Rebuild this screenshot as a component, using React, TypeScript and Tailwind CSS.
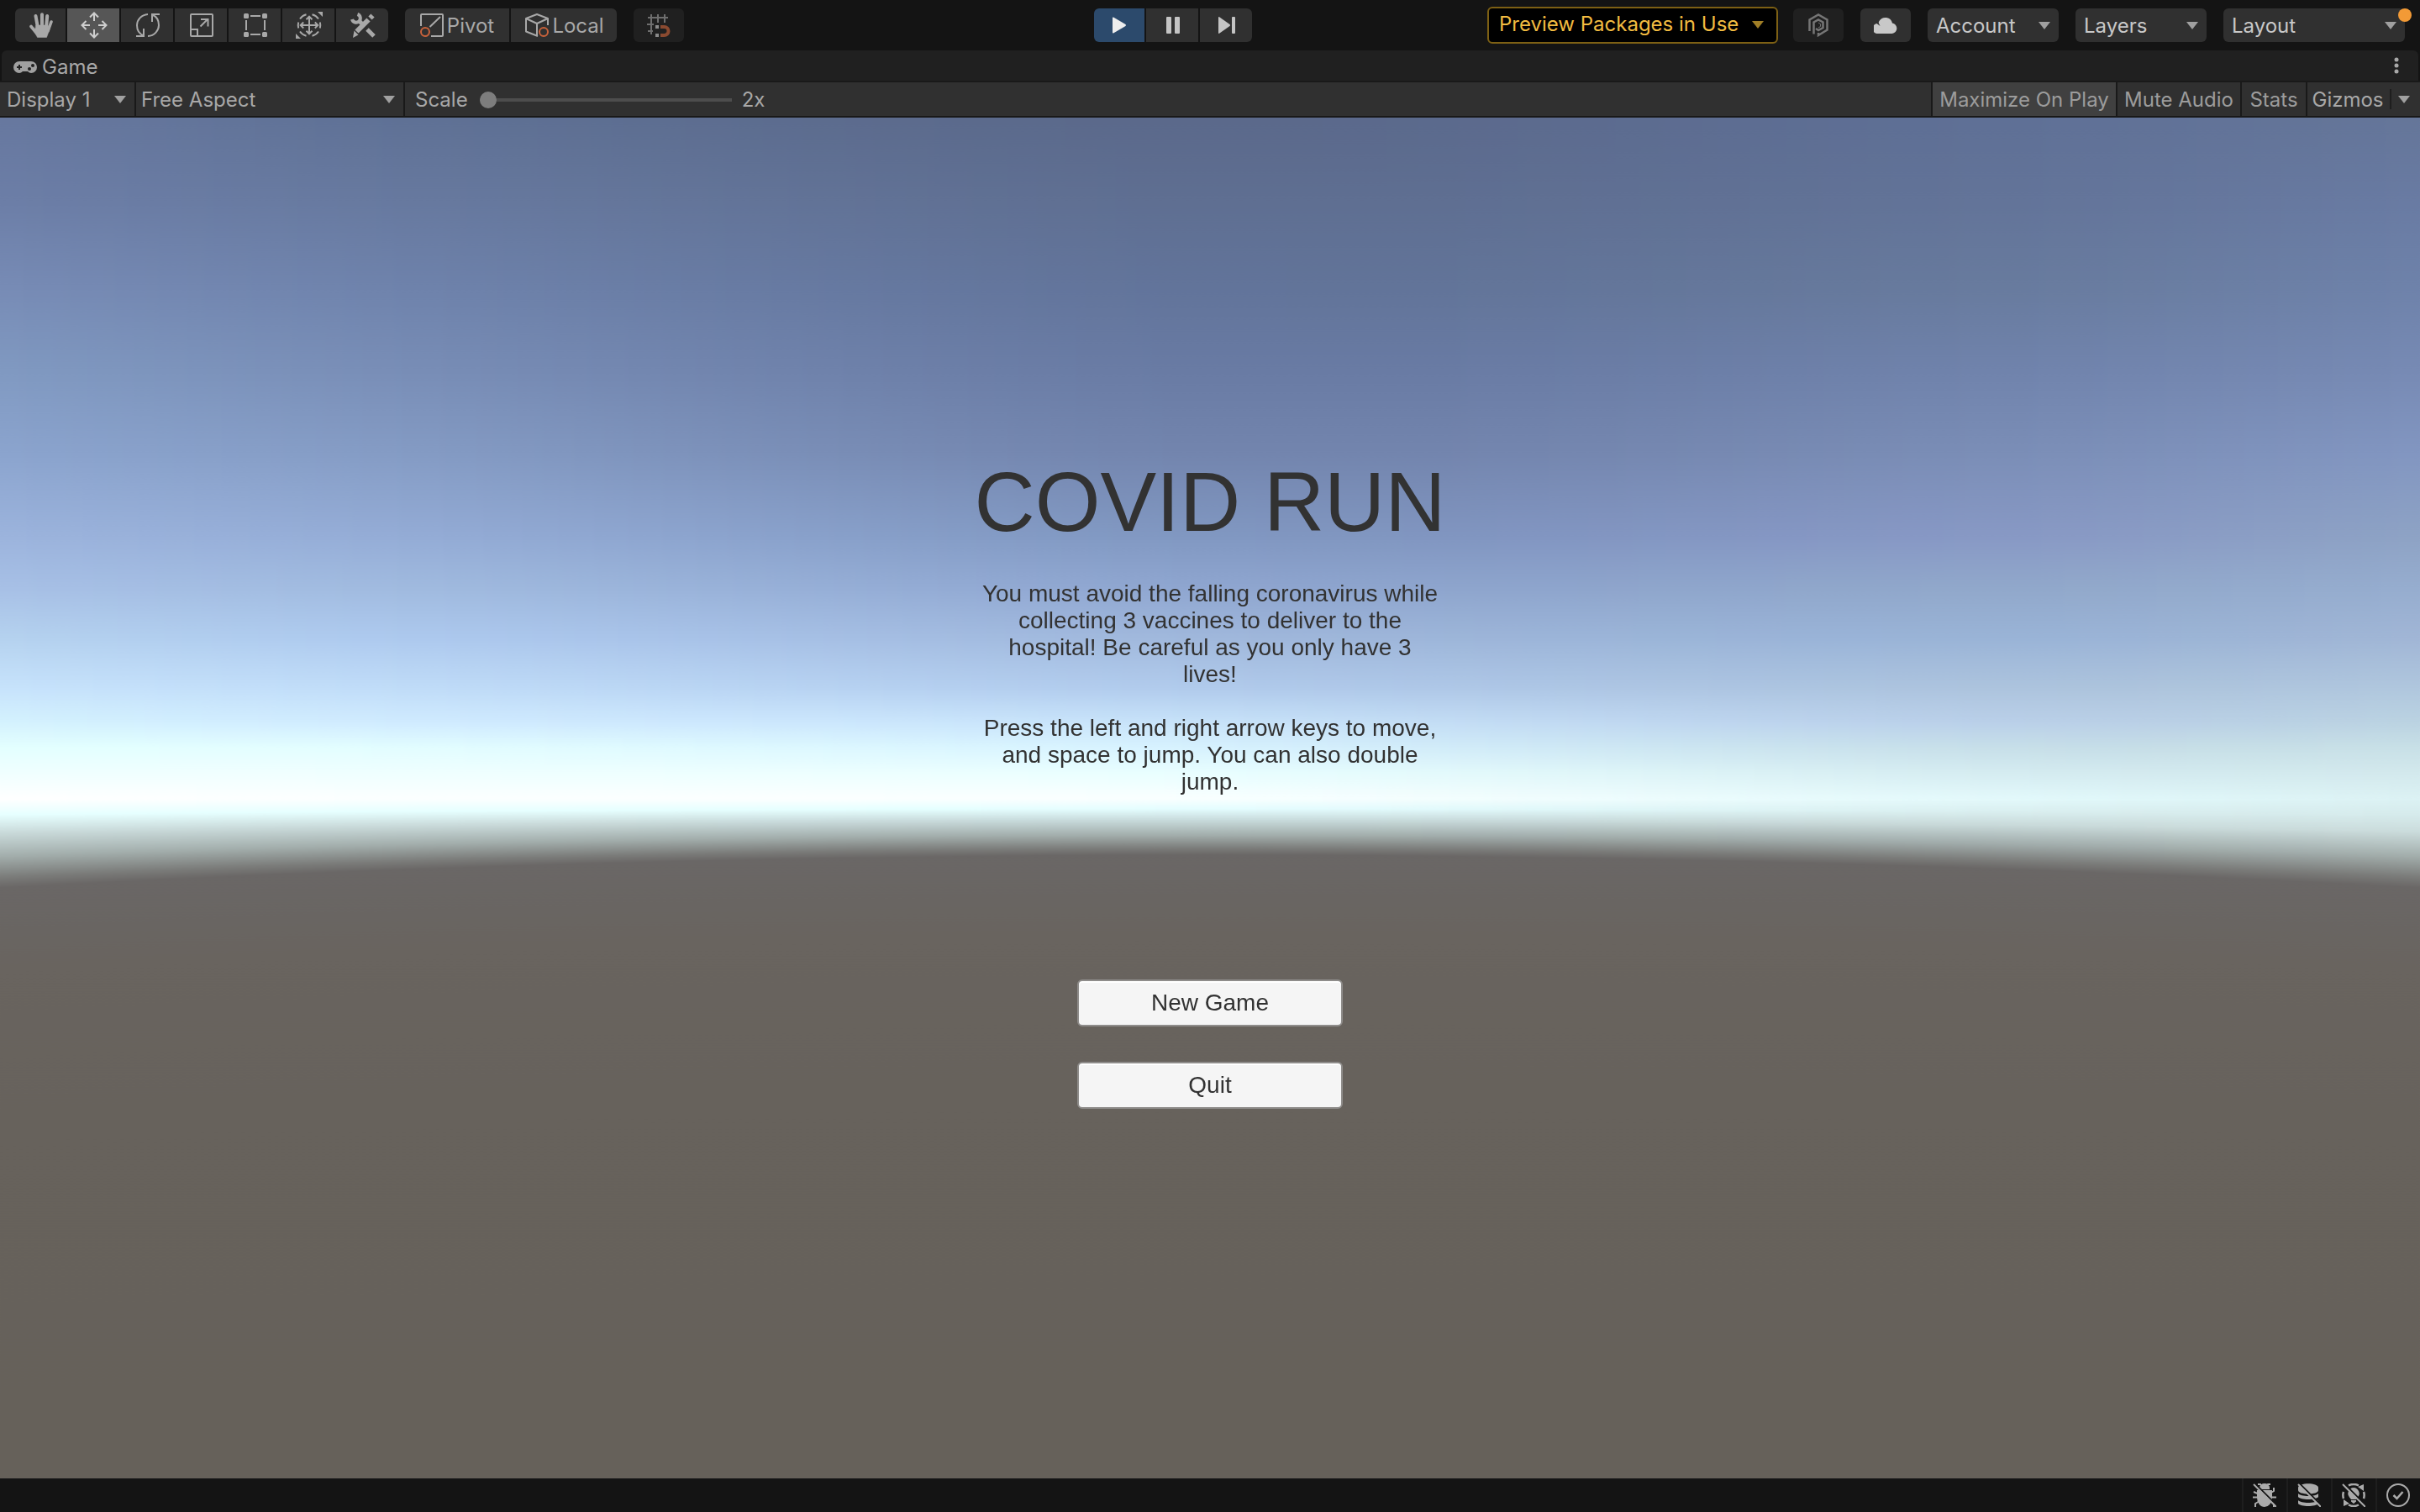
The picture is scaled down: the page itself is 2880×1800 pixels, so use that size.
import { useEffect, useRef, useState } from "react";
import type { ReactNode } from "react";

// sky colours down the view, one entry per column in SKY_COLUMNS
const SKY_COLUMNS = [0, 0.174, 0.5, 0.826, 1];
const SKY_ROWS: { y: number; colors: string[] }[] = [
  { y: 0, colors: ["67789f", "5f7195", "5b698b", "5f7096", "657699"] },
  { y: 100, colors: ["6c7ea7", "67799f", "5f6f92", "637499", "697ba3"] },
  { y: 200, colors: ["778bb5", "6e82ab", "62749a", "687b9e", "6e82aa"] },
  { y: 300, colors: ["8099c1", "788db6", "697ba4", "7083ac", "778ab4"] },
  { y: 400, colors: ["8ba4ce", "849bc4", "7385ae", "7b8eb7", "8296c1"] },
  { y: 500, colors: ["9cb4dd", "94acd6", "8198c2", "8899c5", "8ea3c5"] },
  { y: 560, colors: ["a7c0e6", "a0badf", "8fa6d0", "91a8cb", "96adcf"] },
  { y: 620, colors: ["b5d2ef", "adc9ee", "a0b8dc", "9ab4d7", "a1b6d6"] },
  { y: 680, colors: ["c7e3fc", "c0dcf8", "b1cbec", "adc4de", "b0c7de"] },
  { y: 720, colors: ["d4f2fe", "d0ebff", "c7e2f9", "bad0e9", "bbd3e2"] },
  { y: 750, colors: ["e3ffff", "e2fdff", "d6f1fe", "c7dfe9", "c8e0e7"] },
  { y: 780, colors: ["f0ffff", "efffff", "e8feff", "d5ecf1", "d3e9ed"] },
  { y: 811, colors: ["ffffff", "fcffff", "f9ffff", "e3f9fb", "dcf2f4"] },
];

// haze between the horizon and the ground edge, as a share of that distance
const HAZE: { at: number; colors: string[] }[] = [
  { at: 0.18, colors: ["e6ffff", "e6ffff", "e4fdff", "daeff0", "d6ebec"] },
  { at: 0.37, colors: ["cbdcdc", "cbdcdc", "c9dcdd", "c9dada", "cbdcdc"] },
  { at: 0.65, colors: ["a2adab", "a2adab", "a2adab", "a0abaa", "a2adab"] },
  { at: 0.88, colors: ["7b7c7a", "7b7c7a", "7b7c7a", "7b7c7a", "7b7c7a"] },
  { at: 1, colors: ["6a6766", "6a6766", "6a6766", "6a6766", "6a6766"] },
];

const VIEW_HEIGHT = 1620;
const HORIZON = 811;

const channel = (hex: string, n: number) => parseInt(hex.slice(n * 2, n * 2 + 2), 16);

// cubic interpolation, so no seam shows at the inner columns
const smooth = (values: number[], t: number) => {
  const last = SKY_COLUMNS.length - 1;
  const slope = (i: number) => {
    const lo = Math.max(0, i - 1);
    const hi = Math.min(last, i + 1);
    return (values[hi] - values[lo]) / (SKY_COLUMNS[hi] - SKY_COLUMNS[lo]);
  };
  let i = 0;
  while (i < last - 1 && t > SKY_COLUMNS[i + 1]) i++;
  const span = SKY_COLUMNS[i + 1] - SKY_COLUMNS[i];
  const k = (t - SKY_COLUMNS[i]) / span;
  const k2 = k * k;
  const k3 = k2 * k;
  return (
    (2 * k3 - 3 * k2 + 1) * values[i] +
    (k3 - 2 * k2 + k) * span * slope(i) +
    (3 * k2 - 2 * k3) * values[i + 1] +
    (k3 - k2) * span * slope(i + 1)
  );
};

const colorAt = (colors: string[], t: number) => {
  const mix = [0, 1, 2].map((n) => {
    const value = smooth(colors.map((hex) => channel(hex, n)), t);
    return Math.max(0, Math.min(255, Math.round(value)));
  });
  return `rgb(${mix[0]}, ${mix[1]}, ${mix[2]})`;
};

const Skybox = () => {
  const canvasRef = useRef<HTMLCanvasElement>(null);

  useEffect(() => {
    const canvas = canvasRef.current;
    const ctx = canvas?.getContext("2d");
    if (!canvas || !ctx) return;

    for (let x = 0; x < canvas.width; x++) {
      const t = x / (canvas.width - 1);
      const side = (t - 0.5) * 2;
      const edge = 878 + 39 * side * side;
      const gradient = ctx.createLinearGradient(0, 0, 0, canvas.height);
      SKY_ROWS.forEach((row) =>
        gradient.addColorStop(row.y / VIEW_HEIGHT, colorAt(row.colors, t))
      );
      HAZE.forEach((stop) =>
        gradient.addColorStop(
          (HORIZON + (edge - HORIZON) * stop.at) / VIEW_HEIGHT,
          colorAt(stop.colors, t)
        )
      );
      gradient.addColorStop((edge + 100) / VIEW_HEIGHT, "#69645f");
      gradient.addColorStop((edge + 300) / VIEW_HEIGHT, "#67625c");
      gradient.addColorStop(1, "#66615a");
      ctx.fillStyle = gradient;
      ctx.fillRect(x, 0, 1, canvas.height);
    }
  }, []);

  return (
    <canvas
      ref={canvasRef}
      width={1440}
      height={1620}
      className="absolute inset-0 h-full w-full"
    />
  );
};

const HandIcon = () => (
  <svg width="28" height="30" viewBox="0 0 28 30" stroke="currentColor" strokeLinecap="round" fill="currentColor">
    <path d="M7.5 4L10 18M15 2.2V18M21.2 4L20 18" strokeWidth="4" />
    <path d="M26 11L22 22M2 16.5L9 25" strokeWidth="3.6" />
    <path d="M8 15H22L24 20L20.5 29.5H9.5L6 23Z" strokeWidth="0.5" />
  </svg>
);

const MoveIcon = () => (
  <svg width="32" height="32" viewBox="0 0 32 32" fill="none" stroke="currentColor" strokeWidth="2">
    <path d="M16 1.5V11M16 21v9.500M1.500 16H11M21 16h9.500" />
    <path d="M11 6.500l5-5 5 5M11 25.500l5 5 5-5M6.500 11l-5 5 5 5M25.500 11l5 5-5 5" />
  </svg>
);

const RotateIcon = () => (
  <svg width="28" height="28" viewBox="0 0 28 28" fill="none" stroke="currentColor" strokeWidth="2">
    <path d="M14 1C6 1.500 1 8 1 14c0 5.500 3 10.500 8 12.500M9 18v9H0" />
    <path d="M14 27c8-.5 13-7 13-13 0-5.500-3-10.500-8-12.500M19 10V1h9" />
  </svg>
);

const ScaleIcon = () => (
  <svg width="28" height="28" viewBox="0 0 28 28" fill="none" stroke="currentColor" strokeWidth="2">
    <rect x="1" y="1" width="26" height="26" rx="1" />
    <path d="M1 19h8v8M12.500 15.500L21 7M13 7h8.500v8.500" />
  </svg>
);

const RectIcon = () => (
  <svg width="28" height="28" viewBox="0 0 28 28" fill="currentColor">
    <rect width="6" height="6" rx="1.500" />
    <rect x="22" width="6" height="6" rx="1.500" />
    <rect y="22" width="6" height="6" rx="1.500" />
    <rect x="22" y="22" width="6" height="6" rx="1.500" />
    <path d="M8 2h12v2H8zM8 24h12v2H8zM2 8h2v12H2zM24 8h2v12h-2z" />
  </svg>
);

const TransformIcon = () => (
  <svg width="32" height="32" viewBox="0 0 32 32" fill="none" stroke="currentColor" strokeWidth="2">
    <path d="M5 8.500A13 13 0 0 1 12.500 3.200M19.500 3.200A13 13 0 0 1 27 8.500M28.800 12.500a13 13 0 0 1 0 7M27 23.500a13 13 0 0 1-7.500 5.300M12.500 28.800A13 13 0 0 1 5 23.500M3.200 19.500a13 13 0 0 1 0-7" />
    <path d="M16 6v20M6 16h20M12.500 9.200L16 5.700l3.500 3.500M12.500 22.800l3.500 3.500 3.500-3.500M9.200 12.500L5.700 16l3.500 3.500M22.800 12.500l3.500 3.500-3.500 3.500" />
    <path d="M26 0h6v6zM0 26v6h6z" fill="currentColor" stroke="none" />
  </svg>
);

const ToolsIcon = () => (
  <svg width="30" height="30" viewBox="0 0 30 30" fill="none" stroke="currentColor">
    <path d="M8.500 2A5 5 0 1 1 2 8" strokeWidth="4" />
    <path d="M11 10.500l3 3M20 20l8 8" strokeWidth="5" />
    <path d="M7.500 22.500L21.500 8.500" strokeWidth="6" />
    <path d="M23.500 6.500L26.500 3.500" strokeWidth="6" />
    <path d="M4.500 21.500l5 5L3 30z" fill="currentColor" stroke="none" />
  </svg>
);

const PivotIcon = () => (
  <svg width="28" height="28" viewBox="0 0 28 28" fill="none" stroke="currentColor" strokeWidth="2">
    <path d="M1 15V2q0-1 1-1h24q1 0 1 1v24q0 1-1 1H13M11.500 16L24 4" />
    <circle cx="6" cy="22" r="5" stroke="#c9623b" />
  </svg>
);

const CubeIcon = () => (
  <svg width="28" height="28" viewBox="0 0 28 28" fill="none" stroke="currentColor" strokeWidth="2">
    <path d="M27 14V6L14 1 1 6v15.500L15 27M1 6l13 6 13-6M14 12v15" strokeLinejoin="round" />
    <circle cx="22" cy="22" r="6.500" fill="#303030" stroke="none" />
    <circle cx="22" cy="22" r="5" stroke="#c9623b" />
  </svg>
);

const SnapIcon = () => (
  <svg width="28" height="28" viewBox="0 0 28 28" fill="none" stroke="#6e6e6e" strokeWidth="2">
    <path d="M1 5h24M5 1v24M13 1v10M21 1v10M0 13h8M1 21h6" />
    <path d="M10 14h4v4h-4zM10 24h4v4h-4z" fill="#8a8a8a" stroke="none" />
    <path d="M16 16h4.500a5 5 0 0 1 0 10H16" stroke="#8a4a30" strokeWidth="4" />
  </svg>
);

const PlayIcon = () => (
  <svg width="18" height="20" viewBox="0 0 18 20" fill="currentColor">
    <path d="M1 1.500Q1 0 2.500.8L16.500 9q1 1 0 2L2.500 19.200Q1 20 1 18.500z" />
  </svg>
);

const PauseIcon = () => (
  <svg width="16" height="20" viewBox="0 0 16 20" fill="currentColor">
    <rect width="6" height="20" rx="1" />
    <rect x="10" width="6" height="20" rx="1" />
  </svg>
);

const StepIcon = () => (
  <svg width="20" height="20" viewBox="0 0 20 20" fill="currentColor">
    <path d="M0 1Q0-.5 1.500.5L13.500 9q1 1 0 2L1.500 19.500Q0 20.500 0 19z" />
    <rect x="16" width="4" height="20" rx="1" />
  </svg>
);

const CollabIcon = () => (
  <svg width="24" height="28" viewBox="0 0 24 28" fill="none" stroke="#757575" strokeWidth="2.500">
    <path d="M1.500 21V7.500L12 1.500l10.500 6v12L12 26v-3" />
    <path d="M6.500 24.500V10.500L12 7.500l5.500 3v6.500L12 20l-3-2" />
    <path d="M12 11l2.500 1.500v3L12 17" strokeWidth="1" />
  </svg>
);

const CloudIcon = () => (
  <svg width="28" height="20" viewBox="0 0 28 20" fill="currentColor">
    <path d="M6 20a6 6 0 0 1-2.500-12L7.500 11C6 8 5 7 6.500 5A8.500 8.500 0 0 1 22 7.500 6.300 6.300 0 0 1 21.700 20z" />
  </svg>
);

const GamepadIcon = () => (
  <svg width="28" height="14" viewBox="0 0 28 14">
    <path d="M7 0h14a7 7 0 0 1 0 14q-2 0-4-2h-6Q9 14 7 14A7 7 0 0 1 7 0z" fill="#a0a0a0" />
    <path d="M4 7h6M7 4v6" stroke="#202020" strokeWidth="2" />
    <circle cx="23" cy="5" r="2" fill="#202020" />
    <circle cx="19" cy="9" r="2" fill="#202020" />
  </svg>
);

const Slash = () => (
  <>
    <path d="M2.500 0l27 27" stroke="#141414" strokeWidth="2" />
    <path d="M1 1l27 27" stroke="#ababab" strokeWidth="2" />
  </>
);

const BugIcon = () => (
  <svg width="28" height="28" viewBox="0 0 28 28" fill="none">
    <path d="M6 1h3l2 3M21 1h-3l-2 3M25 5v4l-5 3M20 16.500h8M20 21l5 3v4M3 28v-4l5-3M0 16.500h8M1 10l7 3" stroke="#ababab" strokeWidth="2" />
    <path d="M8 5a6 5 0 0 1 12 0v2H8zM5 8h18v9a9 11 0 0 1-18 0z" fill="#ababab" />
    <Slash />
  </svg>
);

const CacheIcon = () => (
  <svg width="28" height="28" viewBox="0 0 28 28">
    <path d="M1 5c0-6.500 24-6.500 24 0v3c0 6-24 6-24 0z" fill="#ababab" />
    <path d="M1 12c3 4 21 4 24 0v4c-3 4-21 4-24 0zM1 20c3 4 21 4 24 0v4c-3 4-21 4-24 0z" fill="#ababab" />
    <Slash />
  </svg>
);

const LightIcon = () => (
  <svg width="28" height="28" viewBox="0 0 28 28" fill="none">
    <path d="M8 2.500a13 13 0 0 1 12 0M26 10a13 13 0 0 1 0 8M20 25.500a13 13 0 0 1-12 0M2 18a13 13 0 0 1 0-8" stroke="#ababab" strokeWidth="2.500" />
    <path d="M26 1v8l-7-5zM2 27v-8l7 5z" fill="#ababab" />
    <path d="M14 5a7 7 0 0 1 5 11.500L17 19h-6l-2-2.500A7 7 0 0 1 14 5zM11 20h6v1.500l-3 2.500-3-2.500z" fill="#ababab" />
    <Slash />
  </svg>
);

const CheckIcon = () => (
  <svg width="28" height="28" viewBox="0 0 28 28" fill="none" stroke="#ababab">
    <circle cx="14" cy="14" r="13" strokeWidth="2" />
    <path d="M8.500 14l4 4 7-8" strokeWidth="2.500" />
  </svg>
);

const Arrow = ({ className = "text-[#a0a0a0]" }: { className?: string }) => (
  <svg width="14" height="9" viewBox="0 0 14 9" fill="currentColor" className={`shrink-0 ${className}`}>
    <path d="M0 0h14L7 9z" />
  </svg>
);

type DropdownProps = {
  label: string;
  options: string[];
  className: string;
  selectClassName?: string;
};

const Dropdown = ({ label, options, className, selectClassName = "pl-[10px]" }: DropdownProps) => (
  <div className={`grid h-10 items-center ${className}`}>
    <select
      aria-label={label}
      className={`col-start-1 row-start-1 h-10 w-full appearance-none bg-transparent pt-[2px] pr-8 outline-none ${selectClassName}`}
    >
      {options.map((option) => (
        <option key={option}>{option}</option>
      ))}
    </select>
    <div className="pointer-events-none col-start-1 row-start-1 justify-self-end pr-[10px]">
      <Arrow />
    </div>
  </div>
);

const tools: { name: string; icon: ReactNode }[] = [
  { name: "Hand", icon: <HandIcon /> },
  { name: "Move", icon: <MoveIcon /> },
  { name: "Rotate", icon: <RotateIcon /> },
  { name: "Scale", icon: <ScaleIcon /> },
  { name: "Rect", icon: <RectIcon /> },
  { name: "Transform", icon: <TransformIcon /> },
  { name: "Custom", icon: <ToolsIcon /> },
];

const statusItems: { name: string; icon: ReactNode }[] = [
  { name: "Debug mode", icon: <BugIcon /> },
  { name: "Cache server", icon: <CacheIcon /> },
  { name: "Auto lighting", icon: <LightIcon /> },
  { name: "Activity", icon: <CheckIcon /> },
];

const Toolbar = () => {
  const [tool, setTool] = useState("Move");

  return (
    <header className="grid h-[60px] grid-cols-[1fr_auto_1fr] items-center px-[18px]">
      <div className="flex items-center text-[#a8a8a8]">
        <div className="flex gap-[2px] overflow-hidden rounded-md">
          {tools.map(({ name, icon }) => (
            <button
              key={name}
              aria-label={name}
              onClick={() => setTool(name)}
              className={`flex h-10 w-[62px] items-center justify-center pl-[2px] first:w-[60px] ${
                tool === name ? "bg-[#565656] text-[#cfcfcf]" : "bg-[#303030]"
              }`}
            >
              {icon}
            </button>
          ))}
        </div>
        <div className="ml-5 flex gap-[2px] overflow-hidden rounded-md">
          <button className="flex h-10 w-[124px] items-center justify-center gap-1 bg-[#303030]">
            <PivotIcon />
            <span className="pt-[2px]">Pivot</span>
          </button>
          <button className="flex h-10 w-[126px] items-center justify-center gap-1 bg-[#303030] pl-[2px]">
            <CubeIcon />
            <span className="pt-[2px]">Local</span>
          </button>
        </div>
        <button
          aria-label="Grid snapping"
          disabled
          className="ml-5 flex h-10 w-[60px] items-center justify-center rounded-md bg-[#202020]"
        >
          <SnapIcon />
        </button>
      </div>

      <div className="mr-[88px] flex gap-[2px] overflow-hidden rounded-md text-[#c4c4c4]">
        <button aria-label="Play" className="flex h-10 w-[60px] items-center justify-center bg-[#2c4a6c] text-[#eeeeee]">
          <PlayIcon />
        </button>
        <button aria-label="Pause" className="flex h-10 w-[62px] items-center justify-center bg-[#303030] pl-[2px]">
          <PauseIcon />
        </button>
        <button aria-label="Step" className="flex h-10 w-[62px] items-center justify-center bg-[#303030] pl-[2px]">
          <StepIcon />
        </button>
      </div>

      <div className="flex items-center justify-end text-[#c8c8c8]">
        <button className="flex h-11 w-[346px] items-center justify-between rounded-md border-2 border-[#7d6014] bg-black pr-[15px] pb-[2px] pl-3 text-[#f2bc41]">
          Preview Packages in Use
          <Arrow className="text-[#a07e26]" />
        </button>
        <button
          aria-label="Collaborate"
          disabled
          className="ml-[18px] flex h-10 w-[60px] items-center justify-center rounded-md bg-[#202020]"
        >
          <CollabIcon />
        </button>
        <button
          aria-label="Services"
          className="ml-5 flex h-10 w-[60px] items-center justify-center rounded-md bg-[#303030]"
        >
          <CloudIcon />
        </button>
        <Dropdown label="Account" options={["Account"]} className="ml-5 w-[156px] rounded-md bg-[#303030]" />
        <Dropdown label="Layers" options={["Layers"]} className="ml-5 w-[156px] rounded-md bg-[#303030]" />
        <div className="relative ml-5">
          <Dropdown label="Layout" options={["Layout"]} className="w-[216px] rounded-md bg-[#303030]" />
          <span className="absolute top-0 -right-2 h-4 w-4 rounded-full bg-[#f29a36]" />
        </div>
      </div>
    </header>
  );
};

const GameToolbar = () => {
  const [scale, setScale] = useState(1);

  return (
    <div className="flex h-11 items-center border-y-2 border-[#191919] bg-[#303030] text-[#a8a8a8]">
      <Dropdown label="Display" options={["Display 1"]} className="w-[160px]" selectClassName="pl-2" />
      <Dropdown
        label="Aspect"
        options={["Free Aspect"]}
        className="w-[322px] border-x-2 border-[#191919]"
        selectClassName="pl-[6px]"
      />
      <label htmlFor="scale" className="pt-[2px] pl-3">
        Scale
      </label>
      <input
        id="scale"
        type="range"
        min={1}
        max={5}
        step={0.1}
        value={scale}
        onChange={(e) => setScale(Number(e.target.value))}
        className="mt-[2px] ml-[14px] h-5 w-[300px] appearance-none bg-transparent [&::-webkit-slider-runnable-track]:h-1 [&::-webkit-slider-runnable-track]:bg-[#4d4d4d] [&::-webkit-slider-thumb]:-mt-2 [&::-webkit-slider-thumb]:h-5 [&::-webkit-slider-thumb]:w-5 [&::-webkit-slider-thumb]:appearance-none [&::-webkit-slider-thumb]:rounded-full [&::-webkit-slider-thumb]:bg-[#7d7d7d]"
      />
      <span className="pt-[2px] pl-3">2x</span>

      <div className="ml-auto flex text-[#9c9c9c]">
        <button className="h-10 w-[220px] border-l-2 border-[#191919] bg-[#404040] pt-[2px]">Maximize On Play</button>
        <button className="h-10 w-[148px] border-l-2 border-[#191919] pt-[2px]">Mute Audio</button>
        <button className="h-10 w-[78px] border-l-2 border-[#191919] pt-[2px]">Stats</button>
        <div className="flex h-10 items-center border-l-2 border-[#191919] text-[#a8a8a8]">
          <button className="w-[98px] pt-[2px] pr-[2px] text-center">Gizmos</button>
          <button aria-label="Gizmos menu" className="flex h-6 w-9 items-center border-l-2 border-[#1e1e1e] pl-2">
            <Arrow />
          </button>
        </div>
      </div>
    </div>
  );
};

const App = () => {
  return (
    <div className="flex min-h-screen flex-col bg-[#141414] font-['Inter',sans-serif] text-[24px] leading-8">
      <Toolbar />

      <div className="mx-[2px] flex h-9 items-center justify-between rounded-t-md bg-[#202020] pr-[22px] pl-[14px] text-[#a8a8a8]">
        <div className="flex items-center gap-[6px] pt-1">
          <GamepadIcon />
          Game
        </div>
        <button aria-label="Tab menu">
          <svg width="8" height="22" viewBox="0 0 8 22" fill="#a8a8a8">
            <circle cx="4" cy="4" r="2.500" />
            <circle cx="4" cy="11" r="2.500" />
            <circle cx="4" cy="18" r="2.500" />
          </svg>
        </button>
      </div>

      <GameToolbar />

      <main className="relative flex flex-1 flex-col overflow-hidden">
        <Skybox />
        <div className="relative flex flex-1 flex-col items-center justify-center pb-[34px] font-['Liberation_Sans',Arial,sans-serif] text-[28px] text-[#323232]">
          <h1 className="text-[100px] leading-[100px]">COVID RUN</h1>
          <div className="mt-11 text-center">
            <p>
              You must avoid the falling coronavirus while
              <br />
              collecting 3 vaccines to deliver to the
              <br />
              hospital! Be careful as you only have 3
              <br />
              lives!
            </p>
            <p className="mt-8">
              Press the left and right arrow keys to move,
              <br />
              and space to jump. You can also double
              <br />
              jump.
            </p>
          </div>
          <div className="mt-[219px] flex w-[316px] flex-col gap-[42px]">
            <button className="h-14 rounded-md border-2 border-[#8f8d8b] bg-[#f5f5f5] shadow-[inset_0_2px_0_#ffffff]">
              New Game
            </button>
            <button className="h-14 rounded-md border-2 border-[#8f8d8b] bg-[#f5f5f5] shadow-[inset_0_2px_0_#ffffff]">
              Quit
            </button>
          </div>
        </div>
      </main>

      <footer className="flex h-10 justify-end">
        {statusItems.map(({ name, icon }) => (
          <button
            key={name}
            aria-label={name}
            className="flex w-[53px] items-center justify-center border-l-2 border-[#1e1e1e] pr-[2px]"
          >
            {icon}
          </button>
        ))}
      </footer>
    </div>
  );
};

export default App;
